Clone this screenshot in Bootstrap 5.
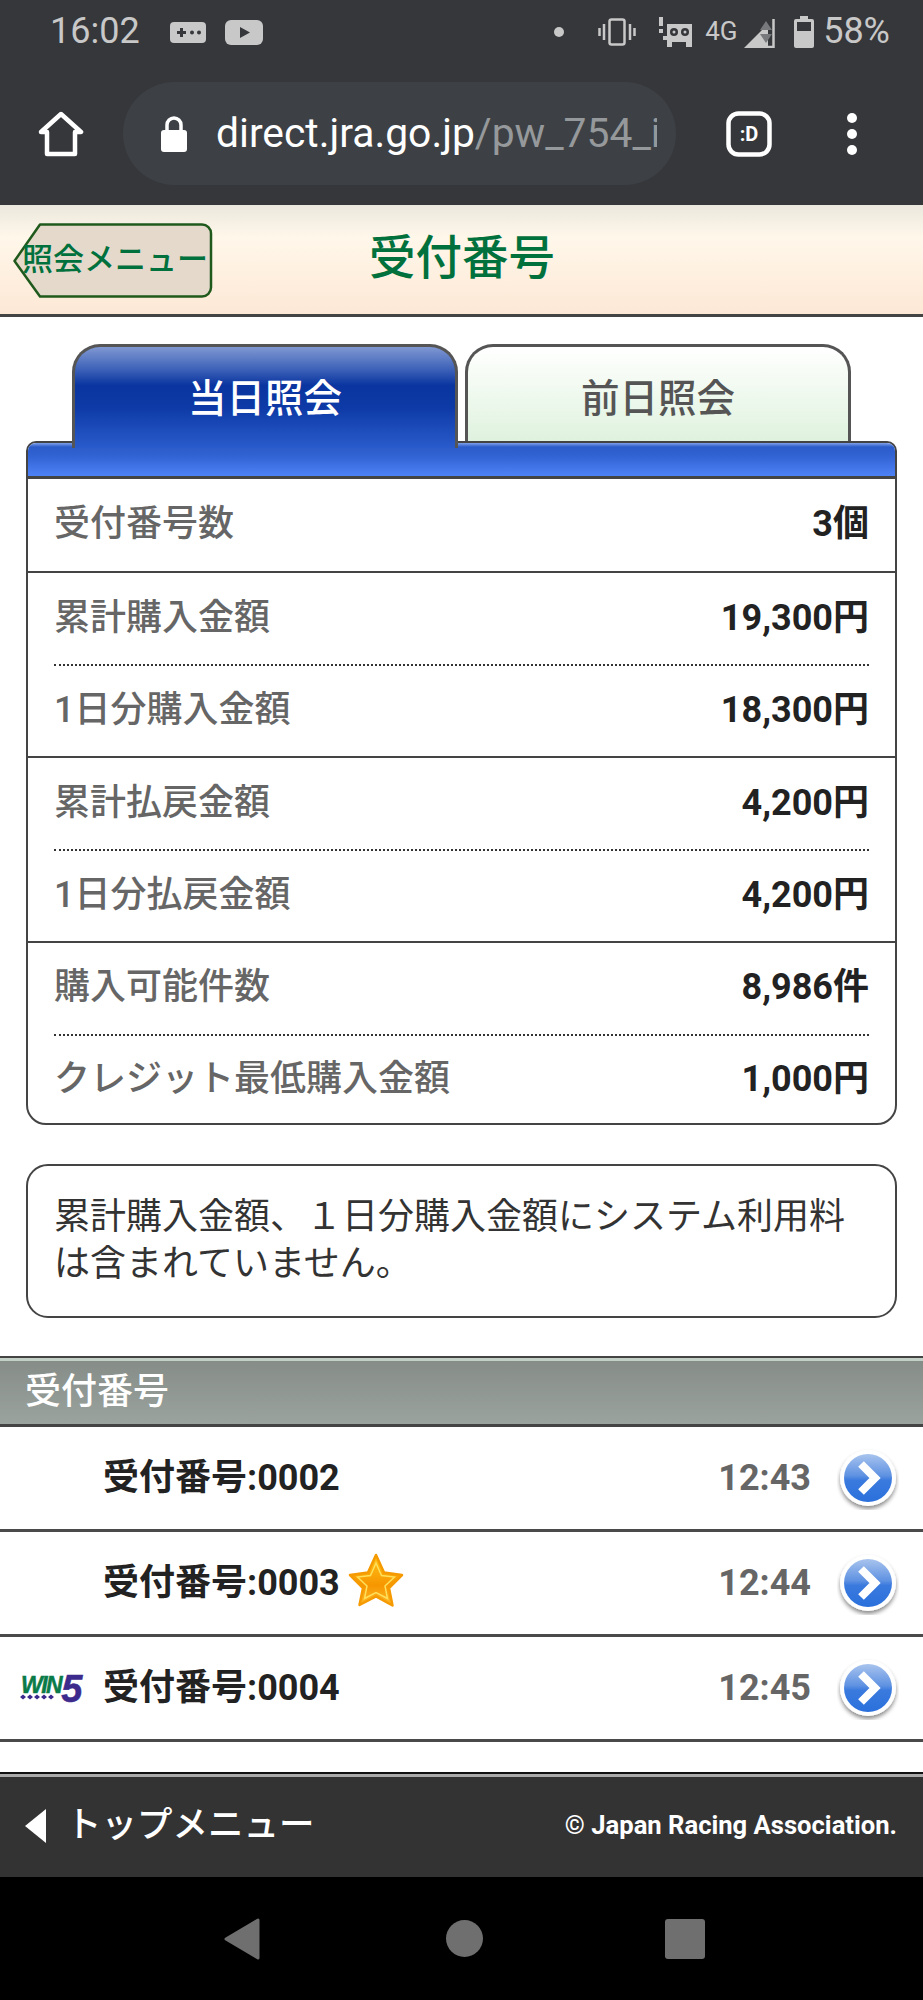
<!DOCTYPE html>
<html lang="ja">
<head>
  <meta charset="UTF-8" />
  <title>受付番号</title>
  <link href="https://cdn.jsdelivr.net/npm/bootstrap@5.3.3/dist/css/bootstrap.min.css" rel="stylesheet" />
  <style>
    body { margin: 0; background: #fff; color: #222; font-family: Roboto, "Noto Sans CJK JP", sans-serif; font-size: 36px; line-height: 1.2; }
    .status-bar { height: 70px; background: #36373b; color: #c8c8c8; padding: 0 33px 6px 50px; font-size: 36px; }
    .status-game { margin-left: 30px; }
    .status-play { margin-left: 19px; }
    .status-dot { margin-right: 34px; }
    .status-tape { margin-left: 22px; }
    .net-label { font-size: 26px; width: 34px; margin-left: 13px; margin-right: 5px; }
    .status-batt { margin-left: 18px; }
    .status-pct { margin-left: 9px; }
    .url-bar { height: 135px; background: #36373b; padding: 0 0 8px 38px; }
    .url-pill { width: 553px; height: 103px; margin-left: 39px; border-radius: 52px; background: #3d4145; padding: 0 19px 0 37px; overflow: hidden; }
    .url-text { font-size: 40.800px; color: #fff; white-space: nowrap; margin-left: 28px; overflow: hidden; width: 441px; flex-shrink: 0; }
    .url-text span { color: #96999b; }
    .tab-count { margin-left: 50px; }
    .menu-dots { margin-left: 75px; }

    .page-head { height: 112px; background: linear-gradient(#ece8dd 0, #fff7ea 30%, #fde8d6 100%); border-bottom: 3px solid #444; padding-left: 13px; }
    .back-btn { position: relative; width: 200px; height: 75px; color: #00703c; font-size: 31px; font-weight: 500; white-space: nowrap; padding-left: 9px; margin-top: 1px; }
    .back-btn svg { position: absolute; left: 0; top: 0; }
    .back-btn span { position: relative; }
    .page-title { color: #00703c; font-size: 46.500px; font-weight: 500; margin-left: 156px; margin-top: -2px; }

    .tab-row { padding: 27px 0 0 72px; gap: 7px; height: 124px; position: relative; z-index: 1; }
    .tab-item { width: 386px; height: 104px; border: 3px solid #555; border-bottom: 0; border-radius: 28px 28px 0 0; font-size: 38.500px; font-weight: 500; }
    .tab-on { background: linear-gradient(#8098d2 0, #3d62b8 22%, #0a35a0 38%, #0d3aa6 60%, #2a5bcc 100%); color: #fff; height: 104px; padding-top: 3px; }
    .tab-off { background: linear-gradient(#fff 0, #f4fbf3 35%, #dff2de 100%); color: #555; height: 97px; padding-top: 10px; }

    .info-panel { margin: 0 26px; height: 684px; border: 2px solid #444; border-radius: 10px 10px 20px 20px; overflow: hidden; }
    .panel-strip { height: 36px; background: linear-gradient(#7f9fe8 0, #2c5cc9 12%, #3263d4 40%, #4d82f6 100%); border-bottom: 3px solid #444; }
    .sum-group { border-bottom: 2px solid #444; padding: 0 26px; }
    .sum-row { height: 91.500px; font-weight: 700; }
    .sum-group:first-of-type .sum-row { height: 90px; }
    .sum-group:last-child { border-bottom: 0; }
    .sum-group:last-child .sum-row { height: 91px; }
    .sum-row + .sum-row { border-top: 2px dotted #333; }
    .sum-label { color: #666; font-weight: 500; }
    .sum-value { color: #222; }

    .note-box { margin: 39px 26px 0; height: 154px; border: 2px solid #444; border-radius: 22px; padding: 28px 26px 0; line-height: 47px; color: #333; font-size: 36px; }

    .section-head { margin-top: 38px; height: 71px; border-top: 2px solid #444; border-bottom: 3px solid #444; box-shadow: inset 0 3px 0 #c3d0c8; background: linear-gradient(#858c87, #9ba39e); color: #fff; font-weight: 500; padding: 4px 0 0 25px; }
    .ticket-row { height: 105px; border-bottom: 3px solid #4a4a4a; padding: 2px 24px 0 20px; font-weight: 700; }
    .ticket-mark { width: 83px; flex-shrink: 0; }
    .ticket-time { margin-left: auto; color: #666; margin-right: 26px; }
    .go-btn { width: 62px; height: 62px; flex-shrink: 0; }
    .star-mark { margin-left: 8px; margin-top: -8px; }
    .win-logo { display: block; overflow: visible; margin-top: -2px; }

    .page-foot { margin-top: 30px; height: 105px; background: #333; border-top: 2px solid #111; box-shadow: inset 0 3px 0 #aaa; color: #fff; padding: 0 26px 0 25px; font-weight: 500; }
    .foot-menu { gap: 20px; font-size: 35.500px; }
    .foot-copy { font-size: 25.600px; font-weight: 700; }
    .nav-bar { height: 123px; background: #000; padding-left: 224px; }
    .nav-home { margin-left: 186px; }
    .nav-recent { margin-left: 182px; }
  </style>
</head>
<body>

<div class="status-bar d-flex align-items-center justify-content-between">
  <div class="d-flex align-items-center">
    <span>16:02</span>
    <svg class="status-game" width="36" height="21" viewBox="0 0 36 21"><rect width="36" height="21" rx="4" fill="#c8c8c8"/><path d="M7 10.500h9M11.500 6v9" stroke="#36373b" stroke-width="3"/><circle cx="22" cy="10.500" r="2" fill="#36373b"/><circle cx="29" cy="10.500" r="2" fill="#36373b"/></svg>
    <svg class="status-play" width="38" height="25" viewBox="0 0 38 25"><rect width="38" height="25" rx="6" fill="#c8c8c8"/><path d="M15 7l10 5.500-10 5.500z" fill="#36373b"/></svg>
  </div>
  <div class="d-flex align-items-center">
    <svg class="status-dot" width="10" height="10" viewBox="0 0 10 10"><circle cx="5" cy="5" r="5" fill="#c8c8c8"/></svg>
    <svg width="38" height="28" viewBox="0 0 38 28" fill="none" stroke="#c8c8c8" stroke-width="2.500"><rect x="11.500" y="1.500" width="15" height="25" rx="2"/><path d="M6 6v16M32 6v16M1.500 10v8M36.500 10v8"/></svg>
    <svg class="status-tape" width="34" height="30" viewBox="0 0 34 30"><path d="M1 0h4v9H1zM1 12h4v4H1z" fill="#c8c8c8"/><path d="M9 7h25v23h-6v-5H14v5H9v-7H5v-4h4z" fill="#c8c8c8"/><circle cx="16" cy="15" r="4" fill="#36373b"/><circle cx="27" cy="15" r="4" fill="#36373b"/><circle cx="16" cy="15" r="1.500" fill="#c8c8c8"/><circle cx="27" cy="15" r="1.500" fill="#c8c8c8"/></svg>
    <span class="net-label">4G</span>
    <svg width="32" height="32" viewBox="0 0 32 32"><path d="M0 32L24 8v24z" fill="#c8c8c8"/><path d="M29.500 3v28H20" fill="none" stroke="#c8c8c8" stroke-width="2.500"/><path d="M22 5l-6 9h12zM16 18h12l-6 9z" fill="#77797c"/></svg>
    <svg class="status-batt" width="20" height="32" viewBox="0 0 20 32"><path d="M6 0h8v3h4a2 2 0 0 1 2 2v25a2 2 0 0 1-2 2H2a2 2 0 0 1-2-2V5a2 2 0 0 1 2-2h4z" fill="#c8c8c8"/><rect x="3" y="6" width="14" height="9" fill="#36373b"/></svg>
    <span class="status-pct">58%</span>
  </div>
</div>

<div class="url-bar d-flex align-items-center">
  <svg width="46" height="46" viewBox="0 0 46 46" fill="none" stroke="#fff" stroke-width="4.500" stroke-linejoin="round"><path d="M3 21L23 3l20 18h-6v22H9V21z"/></svg>
  <div class="url-pill d-flex align-items-center">
    <svg width="28" height="36" viewBox="0 0 28 36" class="flex-shrink-0"><path d="M7 15V9a7 7 0 0 1 14 0v6" fill="none" stroke="#fff" stroke-width="3.500"/><rect x="1" y="14" width="26" height="22" rx="3" fill="#fff"/></svg>
    <div class="url-text">direct.jra.go.jp<span>/pw_754_i</span></div>
  </div>
  <svg class="tab-count" width="46" height="46" viewBox="0 0 46 46"><rect x="2.500" y="2.500" width="41" height="41" rx="10" fill="none" stroke="#fff" stroke-width="4.500"/><text x="23" y="30" text-anchor="middle" font-family="Roboto" font-weight="700" font-size="20" fill="#fff">:D</text></svg>
  <svg class="menu-dots" width="10" height="42" viewBox="0 0 10 42"><circle cx="5" cy="5" r="5" fill="#fff"/><circle cx="5" cy="21" r="5" fill="#fff"/><circle cx="5" cy="37" r="5" fill="#fff"/></svg>
</div>

<div class="page-head d-flex align-items-center">
  <a class="back-btn d-flex align-items-center text-decoration-none">
    <svg width="200" height="75" viewBox="0 0 200 75"><path d="M27 1.500h162a9 9 0 0 1 9 9v54a9 9 0 0 1-9 9H27L1.500 38z" fill="#e5d9cc" stroke="#1f5a1c" stroke-width="2.500" stroke-linejoin="round"/></svg>
    <span>照会メニュー</span>
  </a>
  <div class="page-title">受付番号</div>
</div>

<div class="tab-row nav">
  <div class="tab-item tab-on d-flex align-items-center justify-content-center">当日照会</div>
  <div class="tab-item tab-off d-flex align-items-center justify-content-center">前日照会</div>
</div>

<div class="info-panel">
  <div class="panel-strip"></div>
  <div class="sum-group">
    <div class="sum-row d-flex align-items-center justify-content-between"><span class="sum-label">受付番号数</span><span class="sum-value">3個</span></div>
  </div>
  <div class="sum-group">
    <div class="sum-row d-flex align-items-center justify-content-between"><span class="sum-label">累計購入金額</span><span class="sum-value">19,300円</span></div>
    <div class="sum-row d-flex align-items-center justify-content-between"><span class="sum-label">1日分購入金額</span><span class="sum-value">18,300円</span></div>
  </div>
  <div class="sum-group">
    <div class="sum-row d-flex align-items-center justify-content-between"><span class="sum-label">累計払戻金額</span><span class="sum-value">4,200円</span></div>
    <div class="sum-row d-flex align-items-center justify-content-between"><span class="sum-label">1日分払戻金額</span><span class="sum-value">4,200円</span></div>
  </div>
  <div class="sum-group">
    <div class="sum-row d-flex align-items-center justify-content-between"><span class="sum-label">購入可能件数</span><span class="sum-value">8,986件</span></div>
    <div class="sum-row d-flex align-items-center justify-content-between"><span class="sum-label">クレジット最低購入金額</span><span class="sum-value">1,000円</span></div>
  </div>
</div>

<div class="note-box">累計購入金額、１日分購入金額にシステム利用料は含まれていません。</div>

<div class="section-head d-flex align-items-center">受付番号</div>

<svg width="0" height="0" class="position-absolute">
  <defs>
    <linearGradient id="goFill" x1="0" y1="0" x2="0" y2="1"><stop offset="0" stop-color="#a9c4ee"/><stop offset="0.45" stop-color="#5f92e2"/><stop offset="0.55" stop-color="#3a7ade"/><stop offset="1" stop-color="#2a70dc"/></linearGradient>
    <linearGradient id="starFill" x1="0" y1="0" x2="0" y2="1"><stop offset="0" stop-color="#ffc51a"/><stop offset="0.6" stop-color="#f79600"/><stop offset="1" stop-color="#fdb92a"/></linearGradient>
    <filter id="goShadow" x="-20%" y="-20%" width="140%" height="140%"><feDropShadow dx="0" dy="3" stdDeviation="2" flood-color="#000" flood-opacity="0.45"/></filter>
    <symbol id="goIcon" viewBox="0 0 62 62">
      <circle cx="31" cy="30" r="28" fill="#fff" filter="url(#goShadow)"/>
      <circle cx="31" cy="30" r="24" fill="url(#goFill)"/>
      <path d="M24 16l14 14-14 14" fill="none" stroke="#fff" stroke-width="8"/>
    </symbol>
  </defs>
</svg>

<div>
  <div class="ticket-row d-flex align-items-center">
    <div class="ticket-mark"></div>
    <span>受付番号:0002</span>
    <span class="ticket-time">12:43</span>
    <svg class="go-btn"><use href="#goIcon"/></svg>
  </div>
  <div class="ticket-row d-flex align-items-center">
    <div class="ticket-mark"></div>
    <span>受付番号:0003</span>
    <svg class="star-mark" width="56" height="54" viewBox="0 0 56 54"><path d="M28 2l8 17.500 18 2.500-13 13 3.500 17.500L28 43.500 11.500 52 15 35 2 22l18-2.500z" fill="url(#starFill)" stroke="#f59a00" stroke-width="2.500" stroke-linejoin="round"/><path d="M28 10l5.500 12.500 13 1.500-9.500 9 2.500 12.500L28 39.500 16.500 45.500 19 33l-9.500-9 13-1.500z" fill="none" stroke="#ffe05a" stroke-width="1.500"/></svg>
    <span class="ticket-time">12:44</span>
    <svg class="go-btn"><use href="#goIcon"/></svg>
  </div>
  <div class="ticket-row d-flex align-items-center">
    <div class="ticket-mark">
      <svg class="win-logo" width="70" height="30" viewBox="0 0 70 30"><text x="1" y="20" font-family="Liberation Sans" font-style="italic" font-weight="700"><tspan font-size="23" letter-spacing="-1.500" fill="#0a7a48" stroke="#0a7a48" stroke-width="0.500">WIN</tspan><tspan font-size="38" dy="9" fill="#3c2a8c" stroke="#3c2a8c" stroke-width="0.500">5</tspan></text><path d="M3 21.500l3 2.500-3 2.500-3-2.500zM10 21.500l3 2.500-3 2.500-3-2.500zM17 21.500l3 2.500-3 2.500-3-2.500zM24 21.500l3 2.500-3 2.500-3-2.500zM31 21.500l3 2.500-3 2.500-3-2.500z" fill="#3c2a8c"/></svg>
    </div>
    <span>受付番号:0004</span>
    <span class="ticket-time">12:45</span>
    <svg class="go-btn"><use href="#goIcon"/></svg>
  </div>
</div>

<div class="page-foot d-flex align-items-center justify-content-between">
  <div class="foot-menu d-flex align-items-center">
    <svg width="21" height="34" viewBox="0 0 21 34"><path d="M21 0v34L0 17z" fill="#fff"/></svg>
    <span>トップメニュー</span>
  </div>
  <div class="foot-copy">© Japan Racing Association.</div>
</div>

<div class="nav-bar d-flex align-items-center">
  <svg width="36" height="42" viewBox="0 0 36 42"><path d="M34 2v38L2 21z" fill="#6f6f6f" stroke="#6f6f6f" stroke-width="3" stroke-linejoin="round"/></svg>
  <svg class="nav-home" width="37" height="37" viewBox="0 0 37 37"><circle cx="18.500" cy="18.500" r="18.500" fill="#6f6f6f"/></svg>
  <svg class="nav-recent" width="40" height="40" viewBox="0 0 40 40"><rect width="40" height="40" rx="3" fill="#6f6f6f"/></svg>
</div>

</body>
</html>
